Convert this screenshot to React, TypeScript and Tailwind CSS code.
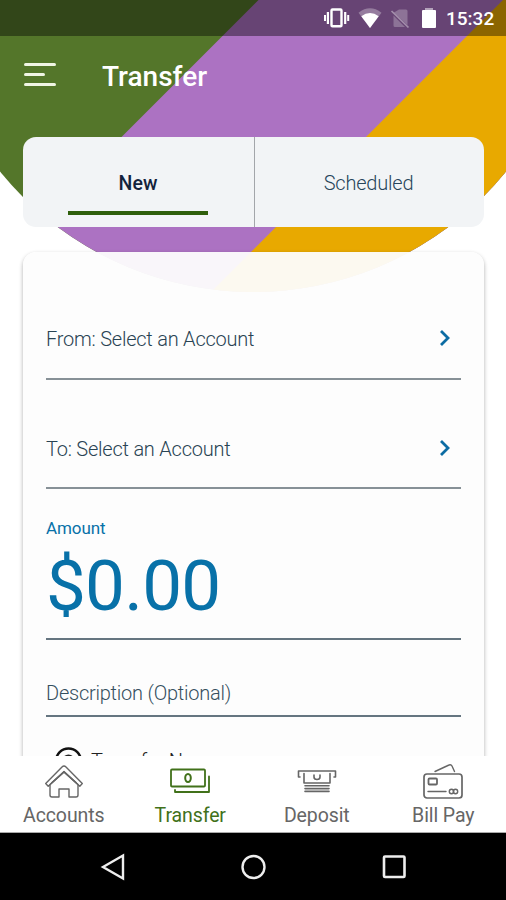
import type { ReactNode } from "react";

function Backdrop() {
  return (
    <svg className="absolute inset-0 h-[756px] w-[506px]" viewBox="0 0 506 756" aria-hidden="true">
      <defs>
        <clipPath id="disc">
          <circle cx="253" cy="-34" r="326" />
        </clipPath>
      </defs>
      <g clipPath="url(#disc)">
        <rect width="506" height="300" fill="#54762a" />
        <path d="M258.500 0H506V300H-41.500Z" fill="#ac72c2" />
        <path d="M503 0H506V300H203Z" fill="#e8a900" />
      </g>
    </svg>
  );
}

function StatusBar() {
  return (
    <div className="relative flex h-9 shrink-0 items-center justify-end bg-black/40 pr-[11px]">
      <svg width="120" height="36" viewBox="0 0 120 36" fill="none" aria-hidden="true">
        <rect x="11.500" y="9.500" width="10" height="16.800" rx="1" stroke="#fff" strokeWidth="2.400" />
        <path d="M7.900 12v12M25.200 12v12" stroke="#fff" strokeWidth="2.200" />
        <path d="M5 15v6M28.200 15v6" stroke="#fff" strokeWidth="2" />
        <path d="M38.500 12.700Q50 4 61.500 12.700L50 28Z" fill="#fff" fillOpacity=".3" />
        <path d="M41.300 16.300Q50 9.500 58.700 16.300L50 28Z" fill="#fff" />
        <path d="M79 9.500h7q1.500 0 1.500 1.500v14L74 12.500ZM73.500 15.500L85 27H75q-1.500 0-1.500-1.500Z" fill="#fff" fillOpacity=".25" />
        <path d="M71.500 11l17 16.500" stroke="#fff" strokeOpacity=".4" strokeWidth="1.700" />
        <rect x="105" y="8" width="8" height="3" fill="#fff" fillOpacity=".5" />
        <rect x="102" y="10" width="14" height="18" rx="1" fill="#fff" />
      </svg>
      <span className="ml-[6px] mt-[2px] w-[49px] whitespace-nowrap text-[19px] font-medium leading-6 text-white">15:32</span>
    </div>
  );
}

function AccountRow({ label }: { label: string }) {
  return (
    <div className="flex items-end justify-between border-b-2 border-[#879197] pb-[27px] pr-[10px] text-[#294353] last:pb-[26px]">
      <span className="text-[20px] font-light leading-6 tracking-[-0.23px]">{label}</span>
      <svg className="mb-[4px]" width="12" height="18" viewBox="0 0 12 18" fill="none" aria-hidden="true">
        <path d="M2 2l7 7-7 7" stroke="#0c6ca3" strokeWidth="2.800" />
      </svg>
    </div>
  );
}

function NavItem({ label, active = false, children }: { label: string; active?: boolean; children: ReactNode }) {
  return (
    <div className={`flex flex-1 flex-col items-center ${active ? "text-[#41711a]" : "text-[#666]"}`}>
      <svg className="ml-px mt-[6px]" width="44" height="40" viewBox="0 0 44 40" fill="none" stroke="currentColor" strokeWidth="1.400" strokeLinejoin="round" strokeLinecap="round" aria-hidden="true">
        {children}
      </svg>
      <span className="ml-px mt-[2px] whitespace-nowrap text-[19.5px] leading-6 tracking-[-0.1px]">{label}</span>
    </div>
  );
}

export default function App() {
  return (
    <div className="relative flex h-[900px] w-[506px] flex-col overflow-hidden bg-white font-['Roboto',sans-serif]">
      <Backdrop />
      <StatusBar />
      <header className="relative flex h-[101px] shrink-0 items-start pl-6 pt-[25px]">
        <div className="mt-[2px] flex w-[78px] flex-col gap-[7px]">
          <span className="h-[3px] w-8 rounded-full bg-[#f0f5e4]" />
          <span className="h-[3px] w-[21px] rounded-full bg-[#f0f5e4]" />
          <span className="h-[3px] w-8 rounded-full bg-[#f0f5e4]" />
        </div>
        <h1 className="text-[28px] font-medium leading-8 text-white">Transfer</h1>
      </header>
      <div className="relative mx-[22px] ml-[23px] flex h-[90px] shrink-0 rounded-[13px] bg-[#f2f4f6]">
        <div className="flex w-[231px] flex-col items-center pr-px pt-[35px]">
          <span className="text-[19.5px] font-medium leading-6 text-[#13233c]">New</span>
          <span className="mt-[15px] h-1 w-[140px] bg-[#2f5f0c]" />
        </div>
        <div className="flex flex-1 justify-center border-l border-[#a3a6aa] pr-[2px] pt-[34px]">
          <span className="text-[20px] font-light leading-6 tracking-[-0.2px] text-[#27445a]">Scheduled</span>
        </div>
      </div>
      <main className="relative min-h-0 flex-1 overflow-hidden pl-[23px] pr-[22px] pt-[25px]">
        <section className="h-[600px] rounded-[13px] bg-[#fdfdfd]/95 px-[23px] shadow-[0_2px_4px_rgba(0,0,0,0.32)]">
          <div className="grid grid-rows-[128px_109px]">
            <AccountRow label="From: Select an Account" />
            <AccountRow label="To: Select an Account" />
          </div>
          <div className="h-[151px] border-b-2 border-[#657580] pt-[27px] text-[#0871a8]">
            <div className="text-[17px] leading-6 tracking-[-0.1px]">Amount</div>
            <div className="mt-[10px] text-[71px] leading-[72px] tracking-[-0.8px]">$0.00</div>
          </div>
          <div className="h-[77px] border-b-2 border-[#657580] pt-[41px] text-[20px] font-light leading-6 tracking-[-0.23px] text-[#354f5e]">
            Description (Optional)
          </div>
          <div className="flex items-start gap-2 pl-[9px] pt-[30px]">
            <svg width="28" height="28" viewBox="0 0 28 28" fill="none" aria-hidden="true">
              <circle cx="13.500" cy="14" r="12.500" stroke="#111" strokeWidth="2.500" />
              <circle cx="13.500" cy="14" r="6.500" fill="#222" />
            </svg>
            <span className="mt-[2px] text-[20px] font-light leading-6 text-[#222]">Transfer Now</span>
          </div>
        </section>
      </main>
      <nav className="relative flex h-[77px] shrink-0 border-b border-[#aaa] bg-white">
        <NavItem label="Accounts">
          <path d="M3.700 21.500L20 5q2-2 4 0l16.300 16.500-2.500 2.700L22 10 6.200 24.200Z" />
          <path d="M8 22.500L22 10l14 12.500V33q0 2-2 2h-7v-8H17v8h-7q-2 0-2-2Z" />
          <path d="M10 20.500l12-11 12 11" />
        </NavItem>
        <NavItem label="Transfer" active>
          <rect x="3" y="7.500" width="34" height="17" rx="1" strokeWidth="1.800" />
          <ellipse cx="20" cy="16" rx="2.800" ry="4" strokeWidth="2" />
          <path d="M41 14.500v15.500H7v-2" strokeWidth="1.800" />
        </NavItem>
        <NavItem label="Deposit">
          <path d="M5 15H3.500V9h37v6H39M9 11.500v9.500h26v-9.500M19 13v2q0 2.500 3 2.500t3-2.500v-2M10 23.800h24M10 26.600h24M10 29.400h24" strokeWidth="1.600" />
        </NavItem>
        <NavItem label="Bill Pay">
          <rect x="3" y="12" width="38" height="24" rx="3" strokeWidth="1.700" />
          <path d="M14 9.500L28 3q2-1 3 1l2.500 5.500M7 29.500h18" />
          <rect x="7.500" y="16.500" width="8.500" height="6" rx="1" strokeWidth="1.800" />
          <circle cx="30.500" cy="29.500" r="2.200" />
          <circle cx="34.500" cy="29.500" r="2.200" />
        </NavItem>
      </nav>
      <footer className="relative flex h-[67px] shrink-0 items-center justify-between bg-black pl-[99px] pr-[98px]">
        <svg width="28" height="30" viewBox="0 0 28 30" fill="none" stroke="#eee" strokeWidth="2.400" aria-hidden="true">
          <path d="M4 15L24 3.500v23Z" />
        </svg>
        <svg width="28" height="30" viewBox="0 0 28 30" fill="none" stroke="#eee" strokeWidth="2.400" aria-hidden="true">
          <circle cx="13.500" cy="15" r="11" />
        </svg>
        <svg width="28" height="30" viewBox="0 0 28 30" fill="none" stroke="#eee" strokeWidth="2.600" aria-hidden="true">
          <rect x="4" y="4.500" width="20.500" height="20.500" rx="1" />
        </svg>
      </footer>
    </div>
  );
}
